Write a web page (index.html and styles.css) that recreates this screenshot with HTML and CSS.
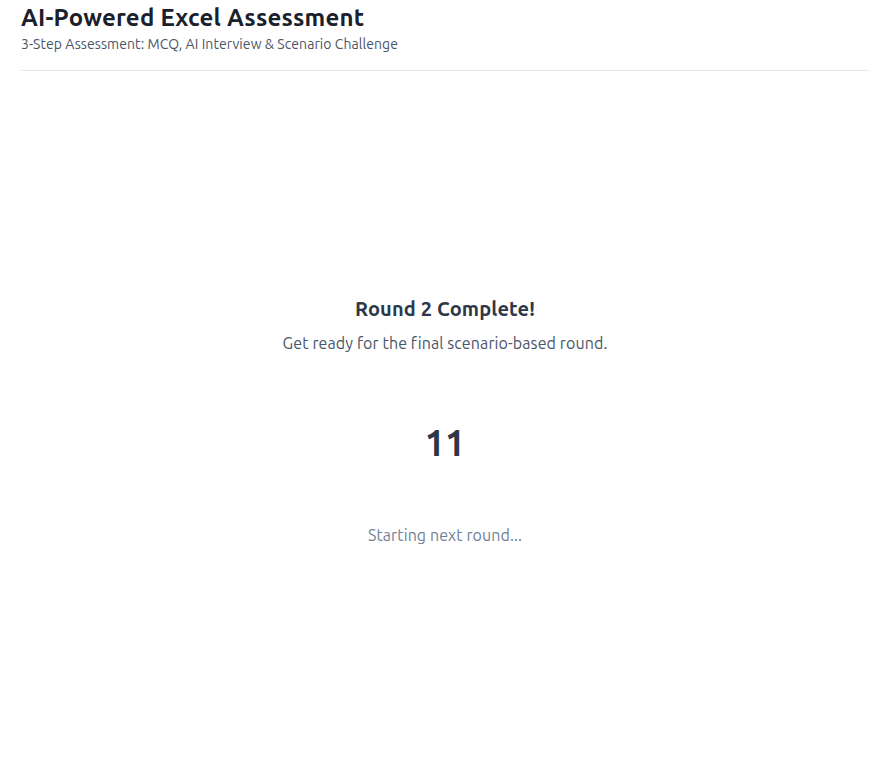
FILE: index.html
```html
<!DOCTYPE html>
<html lang="en">
<head>
<meta charset="utf-8">
<title>AI-Powered Excel Assessment</title>
<link rel="stylesheet" href="styles.css">
</head>
<body>
<div class="page">
  <header class="header">
    <h1 class="title">AI-Powered Excel Assessment</h1>
    <p class="subtitle">3-Step Assessment: MCQ, AI Interview &amp; Scenario Challenge</p>
  </header>
  <main class="main">
    <div class="transition">
      <h2 class="round-title">Round 2 Complete!</h2>
      <p class="round-text">Get ready for the final scenario-based round.</p>
      <div class="countdown">11</div>
      <p class="status">Starting next round...</p>
    </div>
  </main>
</div>
</body>
</html>
```

FILE: styles.css
```css
* { box-sizing: border-box; }
html, body { margin: 0; padding: 0; height: 100%; background: #ffffff; }
body {
  font-family: "Ubuntu", "Noto Sans", "Open Sans", sans-serif;
  color: #2d3748;
}
.page {
  display: flex;
  flex-direction: column;
  height: 100vh;
  padding: 0 16px 0 21px;
}
.header {
  padding: 4px 0 17px;
  border-bottom: 1px solid #e2e8f0;
}
.title {
  margin: 0;
  font-size: 24px;
  line-height: 28px;
  font-weight: 700;
  letter-spacing: 0.22px;
  color: #1a202c;
}
.subtitle {
  margin: 3px 0 0;
  font-size: 14px;
  line-height: 18px;
  letter-spacing: 0.07px;
  color: #4a5568;
}
.main {
  flex: 1;
  display: flex;
  align-items: center;
  justify-content: center;
}
.transition {
  text-align: center;
}
.round-title {
  margin: 0;
  font-size: 20px;
  line-height: 24px;
  font-weight: 700;
  letter-spacing: 0.12px;
  color: #2d3748;
}
.round-text {
  margin: 10px 0 0;
  font-size: 16px;
  line-height: 24px;
  letter-spacing: 0.11px;
  color: #4a5568;
}
.countdown {
  margin-top: 66px;
  font-size: 36px;
  line-height: 44px;
  font-weight: 700;
  color: #2d3748;
}
.status {
  margin: 58px 0 0;
  font-size: 16px;
  line-height: 24px;
  letter-spacing: 0.1px;
  color: #718096;
}
```
